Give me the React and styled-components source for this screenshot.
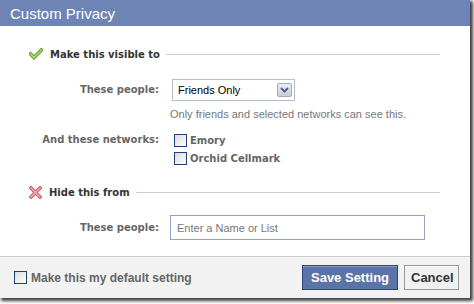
import React, { useState } from "react";
import styled, { createGlobalStyle } from "styled-components";

const GlobalStyle = createGlobalStyle`
  html, body, #root {
    height: 100%;
  }
  body {
    margin: 0;
    background: #fff;
    font-family: "Liberation Sans", Arial, sans-serif;
  }
`;

const Dialog = styled.div`
  width: 470px;
  height: 298px;
  background: #fff;
  box-shadow: 2px 2px 3px 1px rgba(0, 0, 0, 0.75);
  display: flex;
  flex-direction: column;
`;

const Header = styled.div`
  height: 26px;
  line-height: 27px;
  background-color: #6d84b4;
  color: #fff;
  font-size: 15px;
  padding-left: 10px;
`;

const Body = styled.div`
  flex: 1;
  padding-top: 20px;
`;

const SectionHead = styled.div`
  display: flex;
  align-items: center;
  height: 16px;
  padding: 0 30px 0 29px;
  margin-top: ${(p) => p.$top || 0}px;
`;

const SectionTitle = styled.span`
  font-family: "DejaVu Sans", Verdana, sans-serif;
  font-size: 10px;
  font-weight: bold;
  color: #333;
  margin: 0 6px 0 7px;
  white-space: nowrap;
`;

const Rule = styled.div`
  flex: 1;
  height: 1px;
  background: #ccc;
`;

const FormGrid = styled.div`
  display: grid;
  grid-template-columns: 159px 1fr;
  column-gap: 11px;
  align-items: center;
  margin-top: ${(p) => p.$top || 0}px;
`;

const Label = styled.div`
  text-align: right;
  font-family: "DejaVu Sans", Verdana, sans-serif;
  font-size: 10px;
  font-weight: bold;
  color: #666;
  align-self: ${(p) => p.$align || "center"};
  line-height: 16px;
`;

const Select = styled.div`
  margin-left: 2px;
  width: 114px;
  height: 20px;
  border: 1px solid #b4bccd;
  display: flex;
  align-items: center;
  justify-content: space-between;
  padding: 0 2px 0 5px;
  font-size: 11px;
  color: #000;
  box-sizing: content-box;
`;

const SelectButton = styled.span`
  width: 15px;
  height: 14px;
  border: 1px solid #a7a9b3;
  border-radius: 2px;
  background: linear-gradient(#eceef3, #c9ccd6);
  display: flex;
  align-items: center;
  justify-content: center;
  box-sizing: border-box;
`;

const Hint = styled.div`
  grid-column: 2;
  font-size: 11px;
  line-height: 14px;
  color: #777;
  margin-top: 6px;
`;

const Networks = styled.div`
  display: flex;
  flex-direction: column;
  gap: 2px;
  margin-left: 4px;
`;

const CheckRow = styled.label`
  display: flex;
  align-items: center;
  height: 16px;
  gap: ${(p) => p.$gap || 3}px;
  font-family: ${(p) =>
    p.$footer ? '"Liberation Sans", Arial, sans-serif' : '"DejaVu Sans", Verdana, sans-serif'};
  font-size: ${(p) => (p.$footer ? 12 : 10)}px;
  font-weight: bold;
  color: #666;
`;

const Box = styled.span`
  width: 11px;
  height: 11px;
  border: 1px solid #1d4272;
  background: linear-gradient(135deg, #dcdcdc, #fdfdfd);
  flex-shrink: 0;
`;

const TextInput = styled.input`
  width: 255px;
  height: 25px;
  box-sizing: border-box;
  border: 1px solid #94a3c4;
  padding: 0 6px;
  font-family: "Liberation Sans", Arial, sans-serif;
  font-size: 11px;
  color: #333;
  outline: none;

  &::placeholder {
    color: #777;
  }
`;

const Footer = styled.div`
  height: 41px;
  border-top: 1px solid #ccc;
  background: #f2f2f2;
  display: flex;
  align-items: center;
  justify-content: space-between;
  padding: 0 11px 0 14px;
`;

const Buttons = styled.div`
  display: flex;
  gap: 6px;
  align-items: center;
`;

const Button = styled.button`
  height: 25px;
  padding: 0 6px;
  font-family: "Liberation Sans", Arial, sans-serif;
  font-size: 13px;
  font-weight: bold;
  cursor: pointer;
  border: 1px solid ${(p) => (p.$primary ? "#29447e" : "#999")};
  background: ${(p) => (p.$primary ? "#5b74a8" : "#f0f0f0")};
  color: ${(p) => (p.$primary ? "#fff" : "#333")};
  box-shadow: inset 0 1px 0 ${(p) => (p.$primary ? "#8a9cc2" : "#fff")};
  width: ${(p) => p.$w}px;
`;

const CheckIcon = () => (
  <svg width="14" height="12" viewBox="0 0 14 12">
    <polyline points="1.5,6 5,9.5 12.5,2" fill="none" stroke="#5e9e2e" strokeWidth="3.6" strokeLinecap="square" />
    <polyline points="1.5,6 5,9.5 12.5,2" fill="none" stroke="#b5e07a" strokeWidth="1.4" strokeLinecap="square" />
  </svg>
);

const CrossIcon = () => (
  <svg width="13" height="13" viewBox="0 0 13 13">
    <g fill="none" strokeLinecap="square">
      <path d="M2 2 L11 11 M11 2 L2 11" stroke="#c5606c" strokeWidth="3.6" />
      <path d="M2 2 L11 11 M11 2 L2 11" stroke="#f0b4ba" strokeWidth="1.4" />
    </g>
  </svg>
);

const Chevron = () => (
  <svg width="9" height="6" viewBox="0 0 9 6">
    <polyline points="1,1 4.5,4.5 8,1" fill="none" stroke="#4d6185" strokeWidth="2" />
  </svg>
);

export default function App() {
  const [name, setName] = useState("");

  return (
    <>
      <GlobalStyle />
      <Dialog>
        <Header>Custom Privacy</Header>
        <Body>
          <SectionHead>
            <CheckIcon />
            <SectionTitle>Make this visible to</SectionTitle>
            <Rule />
          </SectionHead>

          <FormGrid $top={17}>
            <Label>These people:</Label>
            <Select>
              Friends Only
              <SelectButton>
                <Chevron />
              </SelectButton>
            </Select>
            <Hint>Only friends and selected networks can see this.</Hint>
          </FormGrid>

          <FormGrid $top={11}>
            <Label $align="start">And these networks:</Label>
            <Networks>
              <CheckRow>
                <Box />
                Emory
              </CheckRow>
              <CheckRow>
                <Box />
                Orchid Cellmark
              </CheckRow>
            </Networks>
          </FormGrid>

          <SectionHead $top={18}>
            <CrossIcon />
            <SectionTitle>Hide this from</SectionTitle>
            <Rule />
          </SectionHead>

          <FormGrid $top={15}>
            <Label>These people:</Label>
            <TextInput
              placeholder="Enter a Name or List"
              value={name}
              onChange={(e) => setName(e.target.value)}
            />
          </FormGrid>
        </Body>
        <Footer>
          <CheckRow $footer $gap={4}>
            <Box />
            Make this my default setting
          </CheckRow>
          <Buttons>
            <Button $primary $w={96}>Save Setting</Button>
            <Button $w={55}>Cancel</Button>
          </Buttons>
        </Footer>
      </Dialog>
    </>
  );
}
